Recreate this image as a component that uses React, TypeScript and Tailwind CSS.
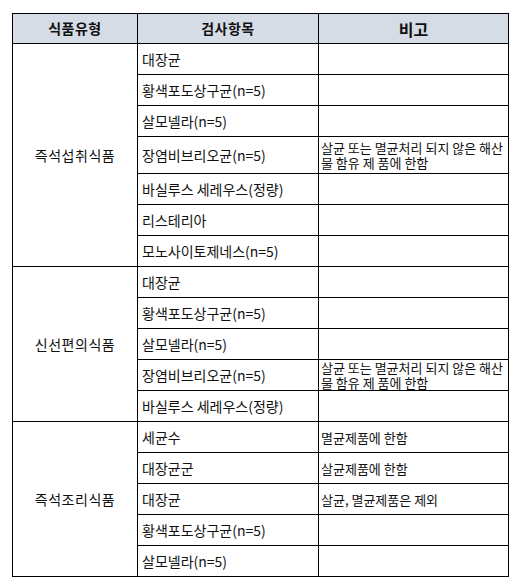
const groups = [
  {
    name: '즉석섭취식품',
    rows: [
      { item: '대장균', note: '', h: 31 },
      { item: '황색포도상구균(n=5)', note: '', h: 31 },
      { item: '살모넬라(n=5)', note: '', h: 31 },
      { item: '장염비브리오균(n=5)', note: '살균 또는 멸균처리 되지 않은 해산물 함유 제 품에 한함', h: 37 },
      { item: '바실루스 세레우스(정량)', note: '', h: 31 },
      { item: '리스테리아', note: '', h: 31 },
      { item: '모노사이토제네스(n=5)', note: '', h: 31 },
    ],
  },
  {
    name: '신선편의식품',
    rows: [
      { item: '대장균', note: '', h: 31 },
      { item: '황색포도상구균(n=5)', note: '', h: 31 },
      { item: '살모넬라(n=5)', note: '', h: 31 },
      { item: '장염비브리오균(n=5)', note: '살균 또는 멸균처리 되지 않은 해산물 함유 제 품에 한함', h: 31 },
      { item: '바실루스 세레우스(정량)', note: '', h: 31 },
    ],
  },
  {
    name: '즉석조리식품',
    rows: [
      { item: '세균수', note: '멸균제품에 한함', h: 31 },
      { item: '대장균군', note: '살균제품에 한함', h: 31 },
      { item: '대장균', note: '살균, 멸균제품은 제외', h: 31 },
      { item: '황색포도상구균(n=5)', note: '', h: 31 },
      { item: '살모넬라(n=5)', note: '', h: 31 },
    ],
  },
]

export default function App() {
  return (
    <div
      className="w-[523px] h-[586px] bg-white pt-[13px] pl-[12px]"
      style={{ fontFamily: '"Noto Sans CJK KR", "Noto Sans", sans-serif' }}
    >
      <table className="w-[496px] border-collapse table-fixed text-[#111]">
        <colgroup>
          <col className="w-[125px]" />
          <col className="w-[181px]" />
          <col className="w-[190px]" />
        </colgroup>
        <thead>
          <tr className="h-[30px] bg-[#d6dce5]">
            <th className="border border-black text-[14px] font-bold tracking-[0.5px]">식품유형</th>
            <th className="border border-black text-[14px] font-bold tracking-[0.5px]">검사항목</th>
            <th className="border border-black text-[16px] font-bold">비고</th>
          </tr>
        </thead>
        <tbody>
          {groups.map((g) =>
            g.rows.map((r, i) => (
              <tr key={g.name + i} style={{ height: r.h }}>
                {i === 0 && (
                  <td rowSpan={g.rows.length} className="border border-black text-center text-[14px] tracking-[0.5px] p-0">
                    {g.name}
                  </td>
                )}
                <td className="border border-black text-[14px] pl-[4px] py-0 leading-none">{r.item}</td>
                <td className="border border-black text-[13px] pl-[2px] pr-[1px] py-0 leading-[15px] break-all">
                  {r.note}
                </td>
              </tr>
            ))
          )}
        </tbody>
      </table>
    </div>
  )
}
